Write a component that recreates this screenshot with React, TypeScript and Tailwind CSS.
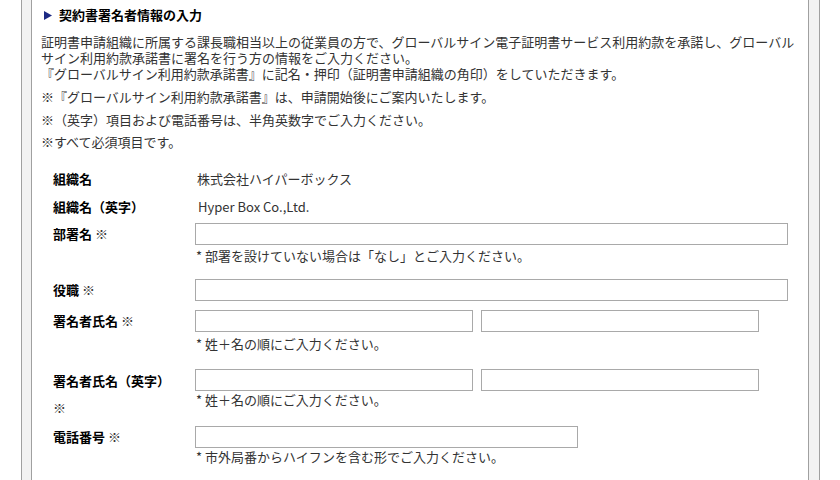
import React from 'react';

const inputCls = 'block h-[22px] border border-[#a9a9a9] bg-white outline-none';

function Label({ text, req, leading = 'leading-[26px]' }: { text: string; req?: boolean; leading?: string }) {
  return (
    <div className={`w-[154px] shrink-0 pl-[12px] pr-[20px] font-bold text-black ${leading}`}>
      {text}
      {req && <span className="font-normal text-[#333]"> ※</span>}
    </div>
  );
}

function Note({ children, className = '' }: { children: React.ReactNode; className?: string }) {
  return <p className={`pl-[1px] leading-[16px] ${className}`}>{children}</p>;
}

export default function App() {
  return (
    <div className="h-[480px] w-[840px] overflow-hidden bg-white font-['Noto_Sans_CJK_JP','Noto_Sans',sans-serif] text-[13px] text-[#333]">
      <div className="ml-[21px] h-full w-[799px] border-x border-[#a0a0a0] bg-[#f2f2f2] pl-[9px] pr-[10px]">
        <div className="h-full border-x border-[#a0a0a0] bg-white pl-[9px] pt-[7px]">
          {/* section heading */}
          <h2 className="flex items-center font-bold leading-[16px] text-black">
            <svg className="ml-[3px]" width="8" height="9" viewBox="0 0 8 9">
              <polygon points="0,0 8,4.5 0,9" fill="#1c2a84" />
            </svg>
            <span className="ml-[7px]">契約書署名者情報の入力</span>
          </h2>

          <p className="mt-[11px] leading-[16px]">
            証明書申請組織に所属する課長職相当以上の従業員の方で、グローバルサイン電子証明書サービス利用約款を承諾し、グローバル
            <br />
            サイン利用約款承諾書に署名を行う方の情報をご入力ください。
            <br />
            『グローバルサイン利用約款承諾書』に記名・押印（証明書申請組織の角印）をしていただきます。
          </p>
          <p className="mt-[7px] leading-[16px]">※『グローバルサイン利用約款承諾書』は、申請開始後にご案内いたします。</p>
          <p className="mt-[7px] leading-[16px]">※（英字）項目および電話番号は、半角英数字でご入力ください。</p>
          <p className="mt-[6px] leading-[16px]">※すべて必須項目です。</p>

          <div className="mt-[16px]">
            <div className="flex">
              <Label text="組織名" />
              <div className="pl-[2px] leading-[26px]">株式会社ハイパーボックス</div>
            </div>

            <div className="mt-[2px] flex">
              <Label text="組織名（英字）" />
              <div className="pl-[3px] leading-[26px]">Hyper Box Co.,Ltd.</div>
            </div>

            <div className="mt-[1px] flex">
              <Label text="部署名" req />
              <div className="pt-[2px]">
                <input className={`${inputCls} w-[593px]`} />
                <Note className="mt-[3px]">* 部署を設けていない場合は「なし」とご入力ください。</Note>
              </div>
            </div>

            <div className="mt-[13px] flex">
              <Label text="役職" req />
              <div className="pt-[2px]">
                <input className={`${inputCls} w-[593px]`} />
              </div>
            </div>

            <div className="mt-[5px] flex">
              <Label text="署名者氏名" req />
              <div className="pt-[2px]">
                <div className="flex gap-[8px]">
                  <input className={`${inputCls} w-[278px]`} />
                  <input className={`${inputCls} w-[278px]`} />
                </div>
                <Note className="mt-[4px]">* 姓＋名の順にご入力ください。</Note>
              </div>
            </div>

            <div className="mt-[15px] flex">
              <Label text="署名者氏名（英字）" req leading="leading-[27px]" />
              <div className="pt-[2px]">
                <div className="flex gap-[8px]">
                  <input className={`${inputCls} w-[278px]`} />
                  <input className={`${inputCls} w-[278px]`} />
                </div>
                <Note className="mt-[1px]">* 姓＋名の順にご入力ください。</Note>
              </div>
            </div>

            <div className="mt-[3px] flex">
              <Label text="電話番号" req />
              <div className="pt-[2px]">
                <input className={`${inputCls} w-[383px]`} />
                <Note className="mt-[1px]">* 市外局番からハイフンを含む形でご入力ください。</Note>
              </div>
            </div>
          </div>
        </div>
      </div>
    </div>
  );
}
